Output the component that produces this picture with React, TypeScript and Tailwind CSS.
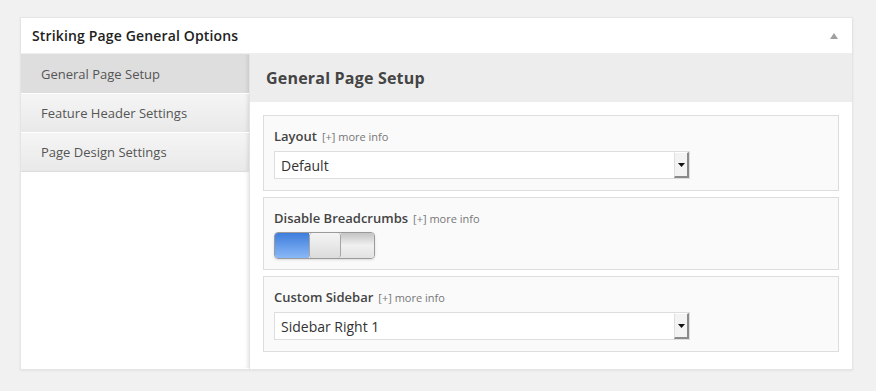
import React from 'react';

const font = { fontFamily: '"Open Sans", "Liberation Sans", sans-serif' };

const Tab: React.FC<{ label: string; active?: boolean }> = ({ label, active }) => (
    <div
        className={`h-[39px] flex items-center pl-[20px] pt-[2px] text-[13px] text-[#555] border-t border-white shadow-[inset_-4px_0_4px_-3px_rgba(0,0,0,0.12)] ${
            active ? 'bg-[#dedede] border-t-[#dedede]' : 'bg-gradient-to-b from-[#f5f5f5] to-[#e9e9e9]'
        }`}
    >
        {label}
    </div>
);

const MoreInfo: React.FC = () => (
    <span className="ml-[5px] text-[11px] font-normal text-[#777]">[+] more info</span>
);

const Select: React.FC<{ value: string }> = ({ value }) => (
    <div className="w-[416px] h-[28px] flex items-stretch bg-white border border-[#dddddd]">
        <div className="flex-1 flex items-center pl-[6px] text-[14px] text-[#333]">{value}</div>
        <div className="w-[15px] flex items-center justify-center bg-[#f3f3f3] border-r-2 border-b-2 border-[#8a8a8a] border-l border-l-[#e0e0e0] border-t border-t-white">
            <svg width="7" height="4" viewBox="0 0 7 4">
                <path d="M0 0 H7 L3.5 4 Z" fill="#111" />
            </svg>
        </div>
    </div>
);

const Field: React.FC<{ label: string; children: React.ReactNode }> = ({ label, children }) => (
    <div className="bg-[#fafafa] border border-[#dddddd] px-[10px] pt-[11px] pb-[11px]">
        <div className="h-[20px] flex items-center text-[13px] font-semibold text-[#444]">
            {label}
            <MoreInfo />
        </div>
        <div className="mt-[4px]">{children}</div>
    </div>
);

const Toggle: React.FC = () => (
    <div className="w-[101px] h-[27px] flex rounded-[4px] overflow-hidden border border-[#9a9a9a] shadow-sm">
        <div className="w-[34px] bg-gradient-to-b from-[#3d7ddb] to-[#8ab8f7]" />
        <div className="w-[32px] bg-gradient-to-b from-[#f4f4f4] to-[#dcdcdc] border-x border-[#a5a5a5] rounded-[3px]" />
        <div className="flex-1 bg-gradient-to-b from-[#c4c4c4] via-[#f0f0f0] to-[#e2e2e2]" />
    </div>
);

export default function App() {
    return (
        <div className="min-h-[391px] bg-[#f1f1f1] pt-[17px] px-[20px] pb-[20px]" style={font}>
            <div className="w-[833px] bg-white border border-[#e5e5e5] shadow-[0_1px_2px_rgba(0,0,0,0.06)]">
                <div className="h-[36px] flex items-center justify-between pl-[11px] pr-[14px] border-b border-[#eeeeee] shadow-[0_1px_2px_rgba(0,0,0,0.03)]">
                    <span className="text-[14px] font-semibold text-[#222] tracking-[0.15px]">Striking Page General Options</span>
                    <svg width="8" height="6" viewBox="0 0 8 6">
                        <path d="M4 0 L8 6 H0 Z" fill="#a0a0a0" />
                    </svg>
                </div>
                <div className="flex">
                    <div className="w-[228px] shrink-0">
                        <Tab label="General Page Setup" active />
                        <Tab label="Feature Header Settings" />
                        <Tab label="Page Design Settings" />
                        <div className="border-t border-[#dddddd] h-[197px] shadow-[inset_-4px_0_4px_-3px_rgba(0,0,0,0.12)]" />
                    </div>
                    <div className="flex-1 border-l border-[#e3e3e3]">
                        <div className="h-[48px] bg-[#ededed] flex items-center pl-[16px] text-[16px] font-bold text-[#444] tracking-[0.2px]">
                            General Page Setup
                        </div>
                        <div className="px-[13px] pt-[13px] pb-[17px] flex flex-col gap-[6px]">
                            <Field label="Layout">
                                <Select value="Default" />
                            </Field>
                            <div className="bg-[#fafafa] border border-[#dddddd] px-[10px] pt-[11px] pb-[10px]">
                                <div className="h-[20px] flex items-center text-[13px] font-semibold text-[#444]">
                                    Disable Breadcrumbs
                                    <MoreInfo />
                                </div>
                                <div className="mt-[3px]">
                                    <Toggle />
                                </div>
                            </div>
                            <Field label="Custom Sidebar">
                                <Select value="Sidebar Right 1" />
                            </Field>
                        </div>
                    </div>
                </div>
            </div>
        </div>
    );
}
